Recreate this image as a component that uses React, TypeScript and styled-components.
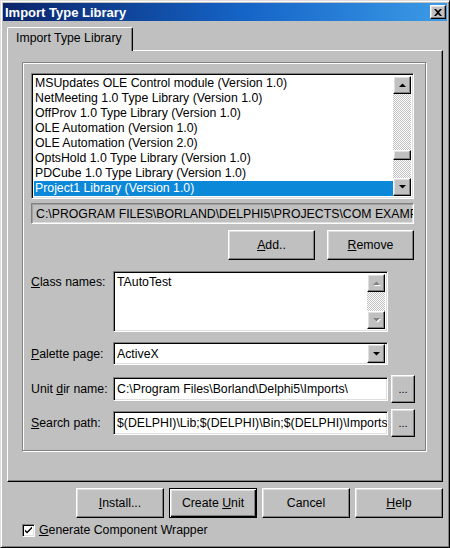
import React from "react";
import styled, { createGlobalStyle, css } from "styled-components";

const GlobalStyle = createGlobalStyle`
  html, body { margin: 0; padding: 0; background: #c0c0c0; }
  * { box-sizing: border-box; }
`;

const FONT = `"Liberation Sans", Arial, sans-serif`;

const raised = css`
  border: 1px solid;
  border-color: #fff #000 #000 #fff;
  box-shadow: inset -1px -1px #808080, inset 1px 1px #dfdfdf;
  background: #c0c0c0;
`;

const sunken = css`
  border: 1px solid;
  border-color: #808080 #fff #fff #808080;
  box-shadow: inset 1px 1px #000, inset -1px -1px #dfdfdf;
`;

const Win = styled.div`
  width: 450px;
  height: 548px;
  background: #c0c0c0;
  border: 1px solid;
  border-color: #dfdfdf #000 #000 #dfdfdf;
  box-shadow: inset 1px 1px #fff, inset -1px -1px #808080;
  padding: 2px;
  display: flex;
  flex-direction: column;
  font-family: ${FONT};
  font-size: 12.3px;
  color: #000;
`;

const TitleBar = styled.div`
  height: 18px;
  flex: none;
  display: flex;
  align-items: center;
  justify-content: space-between;
  padding: 0 1px 0 2px;
  background: linear-gradient(to right, #0a246a 0%, #1565c8 55%, #3c9be6 100%);
`;

const Title = styled.span`
  color: #fff;
  font-weight: bold;
  font-size: 13px;
`;

const CloseBtn = styled.div`
  ${raised};
  width: 16px;
  height: 14px;
  display: flex;
  align-items: center;
  justify-content: center;
`;

const Client = styled.div`
  flex: 1;
  display: flex;
  flex-direction: column;
  padding: 6px 3px 0 4px;
`;

const TabStrip = styled.div`
  display: flex;
  height: 23px;
`;

const Tab = styled.div`
  position: relative;
  z-index: 1;
  width: 126px;
  height: 24px;
  margin-bottom: -1px;
  background: #c0c0c0;
  border-left: 1px solid #fff;
  border-top: 1px solid #fff;
  border-right: 1px solid #000;
  border-radius: 2px 2px 0 0;
  box-shadow: inset -1px 0 #808080;
  padding: 0 0 3px 8px;
  display: flex;
  align-items: center;
`;

const Panel = styled.div`
  width: 436px;
  height: 432px;
  border: 1px solid;
  border-color: #fff #000 #000 #fff;
  box-shadow: inset -1px -1px #808080;
  padding: 11px 0 0 14px;
`;

const Bevel = styled.div`
  width: 404px;
  height: 389px;
  border: 1px solid #808080;
  box-shadow: inset 1px 1px #fff, 1px 1px #fff;
  padding: 10px 0 0 8px;
  display: flex;
  flex-direction: column;
`;

const ListBox = styled.div`
  ${sunken};
  width: 383px;
  height: 126px;
  background: #fff;
  padding: 2px;
  display: flex;
  overflow: hidden;
`;

const ListItems = styled.div`
  flex: 1;
  overflow: hidden;
`;

const Item = styled.div<{ $sel?: boolean }>`
  height: 15px;
  line-height: 15px;
  padding-left: 1px;
  white-space: nowrap;
  overflow: hidden;
  background: ${(p) => (p.$sel ? "#0b88d8" : "transparent")};
  color: ${(p) => (p.$sel ? "#fff" : "#000")};
`;

const ScrollBar = styled.div`
  width: 18px;
  display: flex;
  flex-direction: column;
  flex: none;
`;

const ArrowBtn = styled.div`
  ${raised};
  height: 18px;
  flex: none;
  display: flex;
  align-items: center;
  justify-content: center;
`;

const Track = styled.div`
  flex: 1;
  background: repeating-conic-gradient(#c0c0c0 0 25%, #fff 0 50%) 0 0 / 2px 2px;
  display: flex;
  flex-direction: column;
`;

const Thumb = styled.div`
  ${raised};
  height: 10px;
  flex: none;
`;

const PathField = styled.div`
  width: 383px;
  height: 21px;
  margin-top: 4px;
  border: 1px solid;
  border-color: #808080 #fff #fff #808080;
  box-shadow: inset 1px 1px #a0a0a0, inset -1px -1px #dfdfdf;
  padding: 0 3px 0 4px;
  display: flex;
  align-items: center;
  white-space: nowrap;
  overflow: hidden;
`;

const ButtonRow = styled.div<{ $gap: number }>`
  display: flex;
  justify-content: flex-end;
  gap: ${(p) => p.$gap}px;
`;

const Button = styled.div<{ $w: number; $h?: number; $default?: boolean }>`
  width: ${(p) => p.$w}px;
  height: ${(p) => p.$h ?? 30}px;
  flex: none;
  display: flex;
  align-items: center;
  justify-content: center;
  ${(p) =>
    p.$default
      ? css`
          border: 1px solid #000;
          background: #c0c0c0;
          box-shadow: inset 1px 1px #fff, inset -1px -1px #000, inset -2px -2px #808080, inset 2px 2px #dfdfdf;
        `
      : raised};
`;

const AddRemoveRow = styled(ButtonRow)`
  width: 383px;
  margin-top: 6px;
`;

const FieldRow = styled.div<{ $top: number; $align?: string }>`
  display: flex;
  align-items: ${(p) => p.$align ?? "center"};
  margin-top: ${(p) => p.$top}px;
`;

const Label = styled.div<{ $pt?: number }>`
  width: 82px;
  flex: none;
  white-space: nowrap;
  padding-top: ${(p) => p.$pt ?? 0}px;
`;

const Memo = styled.div`
  ${sunken};
  width: 275px;
  height: 61px;
  background: #fff;
  padding: 2px;
  display: flex;
`;

const MemoText = styled.div`
  flex: 1;
  padding: 1px 0 0 1px;
`;

const Combo = styled.div`
  ${sunken};
  width: 275px;
  height: 23px;
  background: #fff;
  padding: 2px;
  display: flex;
  align-items: center;
`;

const ComboText = styled.div`
  flex: 1;
  padding-left: 1px;
`;

const ComboBtn = styled(ArrowBtn)`
  width: 18px;
  height: 19px;
`;

const Edit = styled.div`
  ${sunken};
  width: 275px;
  height: 24px;
  background: #fff;
  padding: 0 3px;
  display: flex;
  align-items: center;
  white-space: nowrap;
  overflow: hidden;
`;

const DotsBtn = styled(Button)`
  margin-left: 3px;
  align-items: flex-end;
  padding-bottom: 7px;
  font-size: 11px;
`;

const BottomRow = styled(ButtonRow)`
  margin-top: 6px;
  padding-right: 1px;
`;

const CheckRow = styled.div`
  display: flex;
  align-items: center;
  margin: 5px 0 0 15px;
  gap: 4px;
`;

const CheckBox = styled.div`
  ${sunken};
  width: 13px;
  height: 13px;
  background: #fff;
  display: flex;
  align-items: center;
  justify-content: center;
`;

const Arrow = ({ dir, disabled }: { dir: "up" | "down"; disabled?: boolean }) => {
  const pts = dir === "up" ? "0,4 3.5,0.5 7,4" : "0,0 7,0 3.5,3.5";
  return (
    <svg width="9" height="6" viewBox="-1 -1 9 6">
      {disabled && <polygon points={pts} fill="#fff" transform="translate(1,1)" />}
      <polygon points={pts} fill={disabled ? "#808080" : "#000"} />
    </svg>
  );
};

const items = [
  "MSUpdates OLE Control module (Version 1.0)",
  "NetMeeting 1.0 Type Library (Version 1.0)",
  "OffProv 1.0 Type Library (Version 1.0)",
  "OLE Automation (Version 1.0)",
  "OLE Automation (Version 2.0)",
  "OptsHold 1.0 Type Library (Version 1.0)",
  "PDCube 1.0 Type Library (Version 1.0)",
  "Project1 Library (Version 1.0)",
  "ProjectI Library (Version 1.0)",
];

export default function App() {
  return (
    <>
      <GlobalStyle />
      <Win>
        <TitleBar>
          <Title>Import Type Library</Title>
          <CloseBtn>
            <svg width="8" height="7" viewBox="0 0 8 7">
              <path d="M0 0h2l2 2 2-2h2L5 3.5 8 7H6L4 5 2 7H0l3-3.5z" fill="#000" />
            </svg>
          </CloseBtn>
        </TitleBar>
        <Client>
          <TabStrip>
            <Tab>Import Type Library</Tab>
          </TabStrip>
          <Panel>
            <Bevel>
              <ListBox>
                <ListItems>
                  {items.map((t, i) => (
                    <Item key={i} $sel={i === 7}>
                      {t}
                    </Item>
                  ))}
                </ListItems>
                <ScrollBar>
                  <ArrowBtn>
                    <Arrow dir="up" />
                  </ArrowBtn>
                  <Track>
                    <div style={{ height: 56 }} />
                    <Thumb />
                  </Track>
                  <ArrowBtn>
                    <Arrow dir="down" />
                  </ArrowBtn>
                </ScrollBar>
              </ListBox>
              <PathField>{"C:\\PROGRAM FILES\\BORLAND\\DELPHI5\\PROJECTS\\COM EXAMPLES\\"}</PathField>
              <AddRemoveRow $gap={12}>
                <Button $w={87}>
                  <span>
                    <u>A</u>dd..
                  </span>
                </Button>
                <Button $w={87}>
                  <span>
                    <u>R</u>emove
                  </span>
                </Button>
              </AddRemoveRow>
              <FieldRow $top={11} $align="flex-start">
                <Label $pt={4}>
                  <u>C</u>lass names:
                </Label>
                <Memo>
                  <MemoText>TAutoTest</MemoText>
                  <ScrollBar>
                    <ArrowBtn>
                      <Arrow dir="up" disabled />
                    </ArrowBtn>
                    <Track />
                    <ArrowBtn>
                      <Arrow dir="down" disabled />
                    </ArrowBtn>
                  </ScrollBar>
                </Memo>
              </FieldRow>
              <FieldRow $top={10}>
                <Label>
                  <u>P</u>alette page:
                </Label>
                <Combo>
                  <ComboText>ActiveX</ComboText>
                  <ComboBtn>
                    <Arrow dir="down" />
                  </ComboBtn>
                </Combo>
              </FieldRow>
              <FieldRow $top={10}>
                <Label>
                  Unit <u>d</u>ir name:
                </Label>
                <Edit>{"C:\\Program Files\\Borland\\Delphi5\\Imports\\"}</Edit>
                <DotsBtn $w={24} $h={28}>...</DotsBtn>
              </FieldRow>
              <FieldRow $top={6}>
                <Label>
                  <u>S</u>earch path:
                </Label>
                <Edit>{"$(DELPHI)\\Lib;$(DELPHI)\\Bin;$(DELPHI)\\Imports"}</Edit>
                <DotsBtn $w={24} $h={28}>...</DotsBtn>
              </FieldRow>
            </Bevel>
          </Panel>
          <BottomRow $gap={5}>
            <Button $w={88}>
              <span>
                <u>I</u>nstall...
              </span>
            </Button>
            <Button $w={88} $default>
              <span>
                Create <u>U</u>nit
              </span>
            </Button>
            <Button $w={88}>Cancel</Button>
            <Button $w={88}>
              <span>
                <u>H</u>elp
              </span>
            </Button>
          </BottomRow>
          <CheckRow>
            <CheckBox>
              <svg width="7" height="7" viewBox="0 0 7 7">
                <path d="M0 2.5l2 2 5-5v2l-5 5-2-2z" fill="#000" />
              </svg>
            </CheckBox>
            <span>
              <u>G</u>enerate Component Wrapper
            </span>
          </CheckRow>
        </Client>
      </Win>
    </>
  );
}
